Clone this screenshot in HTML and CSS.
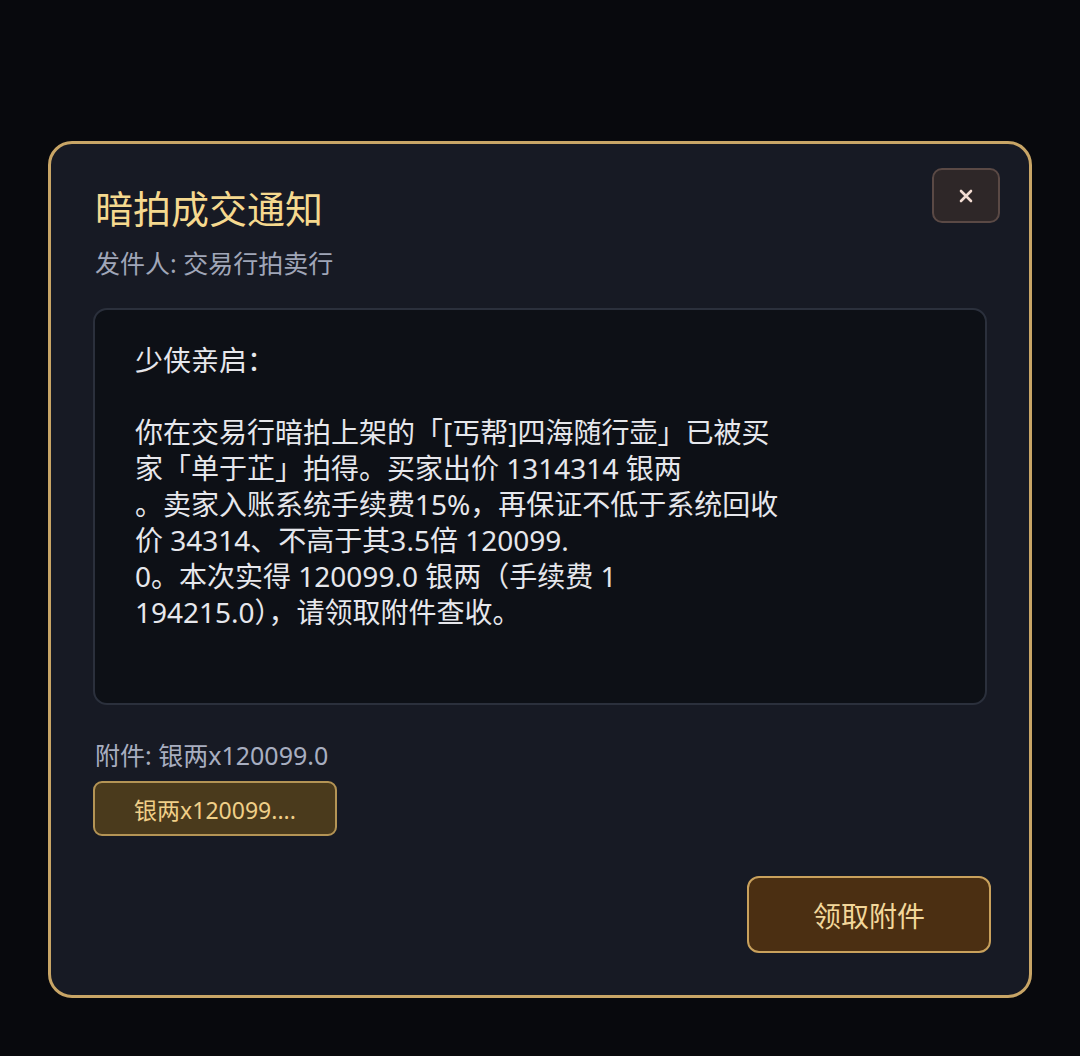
FILE: index.html
```html
<!DOCTYPE html>
<html lang="zh-CN">
<head>
    <meta charset="UTF-8">
    <meta name="viewport" content="width=device-width, initial-scale=1.0">
    <title>暗拍成交通知</title>
    <link rel="stylesheet" href="styles.css">
</head>
<body>
    <div class="mail">
        <div class="close" title="关闭">
            <svg width="16" height="16" viewBox="0 0 16 16">
                <path d="M3 3 L13 13 M13 3 L3 13" stroke="#f2dcd2" stroke-width="2.6" stroke-linecap="round"/>
            </svg>
        </div>
        <h2 class="mail-title">暗拍成交通知</h2>
        <p class="mail-from">发件人: 交易行拍卖行</p>
        <div class="mail-body">
            <p>少侠亲启：</p>
            <p>&nbsp;</p>
            <p>你在交易行暗拍上架的「[丐帮]四海随行壶」已被买</p>
            <p>家「单于芷」拍得。买家出价 1314314 银两</p>
            <p>。卖家入账系统手续费15%，再保证不低于系统回收</p>
            <p>价 34314、不高于其3.5倍 120099.</p>
            <p>0。本次实得 120099.0 银两（手续费 1</p>
            <p>194215.0），请领取附件查收。</p>
        </div>
        <p class="attach-label">附件: 银两x120099.0</p>
        <div class="attach-item">银两x120099....</div>
        <div class="actions">
            <div class="claim-btn">领取附件</div>
        </div>
    </div>
</body>
</html>
```

FILE: styles.css
```css
body {
    margin: 0;
    height: 1056px;
    background: #08090d;
    font-family: "Noto Sans", "Noto Sans CJK SC", sans-serif;
    display: flex;
    justify-content: center;
    align-items: flex-start;
    padding-top: 141px;
    box-sizing: border-box;
}
.mail {
    position: relative;
    width: 984px;
    box-sizing: border-box;
    background: #171a24;
    border: 3px solid #c8a566;
    border-radius: 24px;
    padding: 42px;
}
.close {
    position: absolute;
    top: 24px;
    right: 29px;
    width: 68px;
    height: 55px;
    box-sizing: border-box;
    background: #2e2728;
    border: 2px solid #5a4945;
    border-radius: 10px;
    display: flex;
    justify-content: center;
    align-items: center;
    cursor: pointer;
}
.mail-title {
    margin: 0;
    font-size: 38px;
    line-height: 44px;
    font-weight: 400;
    color: #f5d98f;
    padding-left: 2px;
}
.mail-from {
    margin: 16px 0 0;
    font-size: 25px;
    line-height: 34px;
    color: #a0a6b8;
    padding-left: 2px;
}
.mail-body {
    margin-top: 28px;
    height: 397px;
    box-sizing: border-box;
    background: #0d1016;
    border: 2px solid #2b303c;
    border-radius: 14px;
    padding: 32px 40px;
    color: #e6e7ec;
    font-size: 28px;
    line-height: 36px;
}
.mail-body p {
    margin: 0;
    height: 36px;
    white-space: nowrap;
}
.attach-label {
    margin: 33px 0 0;
    font-size: 25px;
    line-height: 34px;
    color: #a8aec0;
    padding-left: 2px;
}
.attach-item {
    margin-top: 9px;
    width: 244px;
    height: 55px;
    box-sizing: border-box;
    background: #4a3a1c;
    border: 2px solid #b49455;
    border-radius: 9px;
    display: flex;
    justify-content: center;
    align-items: center;
    color: #f0cf88;
    font-size: 23px;
}
.actions {
    display: flex;
    justify-content: flex-end;
    margin-top: 40px;
    margin-right: -4px;
}
.claim-btn {
    width: 244px;
    height: 77px;
    box-sizing: border-box;
    background: #4b2f12;
    border: 2px solid #c9a15c;
    border-radius: 12px;
    display: flex;
    justify-content: center;
    align-items: center;
    color: #f3d79a;
    font-size: 28px;
    cursor: pointer;
}
```
